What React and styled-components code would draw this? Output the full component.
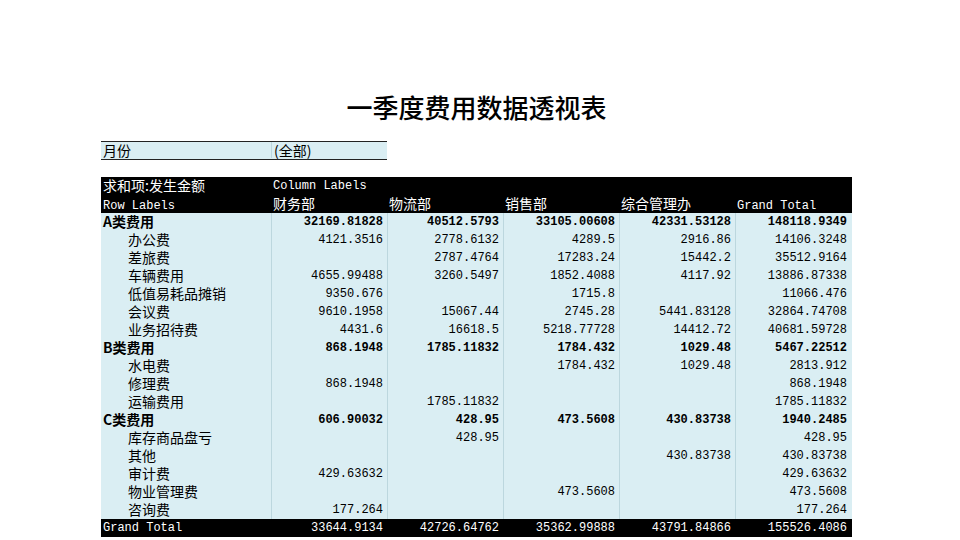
import styled, { createGlobalStyle } from "styled-components";

/**
 * PIVOT TABLE OF Q1 EXPENSES, DRAWN LIKE AN EXCEL SHEET
 */

const rows = [
    { label: "A类费用", bold: true, vals: ["32169.81828", "40512.5793", "33105.00608", "42331.53128", "148118.9349"] },
    { label: "办公费", vals: ["4121.3516", "2778.6132", "4289.5", "2916.86", "14106.3248"] },
    { label: "差旅费", vals: ["", "2787.4764", "17283.24", "15442.2", "35512.9164"] },
    { label: "车辆费用", vals: ["4655.99488", "3260.5497", "1852.4088", "4117.92", "13886.87338"] },
    { label: "低值易耗品摊销", vals: ["9350.676", "", "1715.8", "", "11066.476"] },
    { label: "会议费", vals: ["9610.1958", "15067.44", "2745.28", "5441.83128", "32864.74708"] },
    { label: "业务招待费", vals: ["4431.6", "16618.5", "5218.77728", "14412.72", "40681.59728"] },
    { label: "B类费用", bold: true, vals: ["868.1948", "1785.11832", "1784.432", "1029.48", "5467.22512"] },
    { label: "水电费", vals: ["", "", "1784.432", "1029.48", "2813.912"] },
    { label: "修理费", vals: ["868.1948", "", "", "", "868.1948"] },
    { label: "运输费用", vals: ["", "1785.11832", "", "", "1785.11832"] },
    { label: "C类费用", bold: true, vals: ["606.90032", "428.95", "473.5608", "430.83738", "1940.2485"] },
    { label: "库存商品盘亏", vals: ["", "428.95", "", "", "428.95"] },
    { label: "其他", vals: ["", "", "", "430.83738", "430.83738"] },
    { label: "审计费", vals: ["429.63632", "", "", "", "429.63632"] },
    { label: "物业管理费", vals: ["", "", "473.5608", "", "473.5608"] },
    { label: "咨询费", vals: ["177.264", "", "", "", "177.264"] },
];

const departments = ["财务部", "物流部", "销售部", "综合管理办"];
const grandTotals = ["33644.9134", "42726.64762", "35362.99888", "43791.84866", "155526.4086"];

const App = () => {
    return (
        <>
            <GlobalStyle />
            <Page>
                <Sheet>
                    <Title>一季度费用数据透视表</Title>
                    <FilterRow>
                        <LabelCell>月份</LabelCell>
                        <LabelCell $divider>(全部)</LabelCell>
                    </FilterRow>
                    <Pivot>
                        <HeaderRow>
                            <LabelCell>求和项:发生金额</LabelCell>
                            <MonoCell $span={3}>Column Labels</MonoCell>
                        </HeaderRow>
                        <HeaderRow>
                            <MonoCell $low>Row Labels</MonoCell>
                            {departments.map((dep) => (
                                <LabelCell key={dep}>{dep}</LabelCell>
                            ))}
                            <MonoCell $low>Grand Total</MonoCell>
                        </HeaderRow>
                        {rows.map((row) => (
                            <BodyRow key={row.label}>
                                <LabelCell $bold={row.bold} $indent={!row.bold}>{row.label}</LabelCell>
                                {row.vals.map((v, i) => (
                                    <NumCell key={i} $bold={row.bold}>{v}</NumCell>
                                ))}
                            </BodyRow>
                        ))}
                        <TotalRow>
                            <MonoCell>Grand Total</MonoCell>
                            {grandTotals.map((v, i) => (
                                <NumCell key={i} $plain>{v}</NumCell>
                            ))}
                        </TotalRow>
                    </Pivot>
                </Sheet>
            </Page>
        </>
    );
}

const GlobalStyle = createGlobalStyle`
body{
    margin: 0;
    background: #fff;
    color: #000;
    font-family: "Noto Sans CJK SC", "Liberation Sans", sans-serif;
}
`;

const Page = styled.div`
    padding: 92px 0 0 101px;
`;

const Sheet = styled.div`
    width: 751px;
`;

const Title = styled.h1`
    margin: 0;
    height: 30px;
    line-height: 30px;
    text-align: center;
    font-size: 26px;
    font-weight: 500;
    font-family: "Noto Sans CJK SC", serif;
`;

const cols = "170px repeat(5, 116px)";

const FilterRow = styled.div`
    margin-top: 19px;
    width: 286px;
    display: grid;
    grid-template-columns: 170px 116px;
    height: 17px;
    border-top: 1px solid #222;
    border-bottom: 1px solid #222;
    background: #daeef3;
`;

const Pivot = styled.div`
    margin-top: 17px;
    display: flex;
    flex-direction: column;
`;

const HeaderRow = styled.div`
    display: grid;
    grid-template-columns: ${cols};
    height: 18px;
    background: #000;
    color: #fff;
`;

const BodyRow = styled.div`
    display: grid;
    grid-template-columns: ${cols};
    height: 18px;
    background: #daeef3;
`;

const TotalRow = styled(HeaderRow)``;

const LabelCell = styled.div`
    grid-column: span ${(p) => p.$span || 1};
    height: 16px;
    padding-left: ${(p) => (p.$indent ? "27px" : "2px")};
    font-size: 14px;
    line-height: 16px;
    font-weight: ${(p) => (p.$bold ? 700 : 400)};
    white-space: nowrap;
    border-left: ${(p) => (p.$divider ? "1px solid #bcd7de" : "none")};
`;

const MonoCell = styled.div`
    grid-column: span ${(p) => p.$span || 1};
    padding-left: 2px;
    padding-top: ${(p) => (p.$low ? "2px" : "0")};
    font-family: "Liberation Mono", monospace;
    font-size: 12px;
    line-height: 18px;
    white-space: nowrap;
`;

const NumCell = styled.div`
    padding-right: 4px;
    text-align: right;
    font-family: "Liberation Mono", monospace;
    font-size: 12px;
    line-height: 18px;
    font-weight: ${(p) => (p.$bold ? 700 : 400)};
    border-left: ${(p) => (p.$plain ? "none" : "1px solid #bcd7de")};
    white-space: nowrap;
`;

export default App;
